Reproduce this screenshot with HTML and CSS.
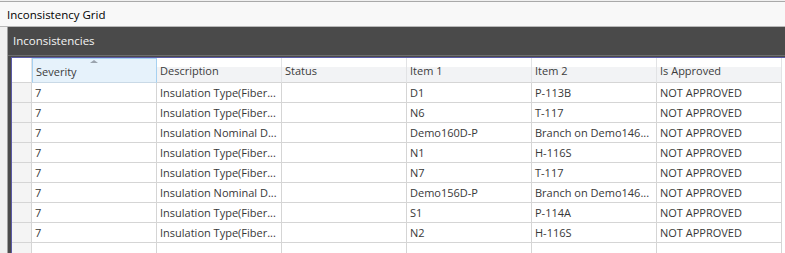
FILE: index.html
```html
<!DOCTYPE html>
<html lang="en">
<head>
    <meta charset="UTF-8">
    <meta name="viewport" content="width=device-width, initial-scale=1.0">
    <title>Inconsistency Grid</title>
    <link rel="stylesheet" href="styles.css">
</head>
<body>

    <div class="title-bar">Inconsistency Grid</div>

    <div class="panel">
        <div class="panel-head">Inconsistencies</div>

        <div class="grid-frame">
            <table class="grid">
                <colgroup>
                    <col class="col-rowhead">
                    <col class="col-data">
                    <col class="col-data">
                    <col class="col-data">
                    <col class="col-data">
                    <col class="col-data">
                    <col class="col-data">
                </colgroup>
                <thead>
                    <tr>
                        <th class="rowhead"></th>
                        <th class="sorted">Severity<span class="sort-arrow"></span></th>
                        <th>Description</th>
                        <th>Status</th>
                        <th>Item 1</th>
                        <th>Item 2</th>
                        <th>Is Approved</th>
                    </tr>
                </thead>
                <tbody>
                    <tr><td class="rowhead"></td><td>7</td><td>Insulation Type(Fiber...</td><td></td><td>D1</td><td>P-113B</td><td>NOT APPROVED</td></tr>
                    <tr><td class="rowhead"></td><td>7</td><td>Insulation Type(Fiber...</td><td></td><td>N6</td><td>T-117</td><td>NOT APPROVED</td></tr>
                    <tr><td class="rowhead"></td><td>7</td><td>Insulation Nominal D...</td><td></td><td>Demo160D-P</td><td>Branch on Demo146...</td><td>NOT APPROVED</td></tr>
                    <tr><td class="rowhead"></td><td>7</td><td>Insulation Type(Fiber...</td><td></td><td>N1</td><td>H-116S</td><td>NOT APPROVED</td></tr>
                    <tr><td class="rowhead"></td><td>7</td><td>Insulation Type(Fiber...</td><td></td><td>N7</td><td>T-117</td><td>NOT APPROVED</td></tr>
                    <tr><td class="rowhead"></td><td>7</td><td>Insulation Nominal D...</td><td></td><td>Demo156D-P</td><td>Branch on Demo146...</td><td>NOT APPROVED</td></tr>
                    <tr><td class="rowhead"></td><td>7</td><td>Insulation Type(Fiber...</td><td></td><td>S1</td><td>P-114A</td><td>NOT APPROVED</td></tr>
                    <tr><td class="rowhead"></td><td>7</td><td>Insulation Type(Fiber...</td><td></td><td>N2</td><td>H-116S</td><td>NOT APPROVED</td></tr>
                    <tr><td class="rowhead"></td><td></td><td></td><td></td><td></td><td></td><td></td></tr>
                </tbody>
            </table>
        </div>
    </div>

</body>
</html>
```

FILE: styles.css
```css
/* Window shell */
body {
    margin: 0;
    height: 253px;
    overflow: hidden;
    background: #f0f0f0;
    font-family: "Open Sans", "Liberation Sans", sans-serif;
    font-size: 11.5px;
    color: #333333;
}

.title-bar {
    margin-top: 1px;
    height: 22px;
    padding-top: 2px;
    line-height: 22px;
    padding-left: 7px;
    background: #f8f8f8;
    border-top: 1px solid #a9a9a9;
    border-bottom: 1px solid #b9b9b9;
    color: #000000;
}

.panel {
    margin-left: 7px;
    border-left: 1px solid #a0a0a0;
    background: #4a4a4a;
}

.panel-head {
    height: 28px;
    line-height: 28px;
    padding-left: 5px;
    color: #f4f4f4;
    border-bottom: 1px solid #6e6e6e;
}

.grid-frame {
    margin-top: 1px;
    margin-left: 3px;
    border-top: 1px solid #5b5ba8;
    border-left: 1px solid #5b5ba8;
    background: #ffffff;
    height: 200px;
}

/* Data grid */
.grid {
    table-layout: fixed;
    border-collapse: separate;
    border-spacing: 0;
    width: 770px;
    font-size: 11px;
    line-height: 14px;
    color: #383838;
}

.col-rowhead { width: 20px; }
.col-data { width: 125px; }

.grid thead tr { height: 25px; }
.grid tbody tr { height: 20px; }

.grid th,
.grid td {
    padding: 0 0 0 3px;
    white-space: nowrap;
    overflow: hidden;
    text-overflow: ellipsis;
    text-align: left;
    font-weight: normal;
}

.grid th {
    position: relative;
    padding-top: 2px;
    color: #3c3c3c;
    background: linear-gradient(#ffffff 0, #ffffff 36%, #f2f3f5 36%, #f2f3f5 100%);
    border-right: 1px solid #e2e3e5;
    border-bottom: 1px solid #d5d5d5;
}

.grid th.sorted {
    background: #e6f2fb;
    border: 1px solid #a6d1f1;
    border-bottom-color: #c9d9e6;
}

.sort-arrow {
    position: absolute;
    left: 57px;
    top: 1px;
    width: 0;
    height: 0;
    border-left: 4px solid transparent;
    border-right: 4px solid transparent;
    border-bottom: 3px solid #9aa3ad;
}

.grid td {
    border-right: 1px solid #d5d5d5;
    border-bottom: 1px solid #d5d5d5;
}

.grid .rowhead {
    padding: 0;
    background: #f4f4f4;
}

.grid th.rowhead {
    background: #ffffff;
    border-right: 1px solid #e2e3e5;
}
```
